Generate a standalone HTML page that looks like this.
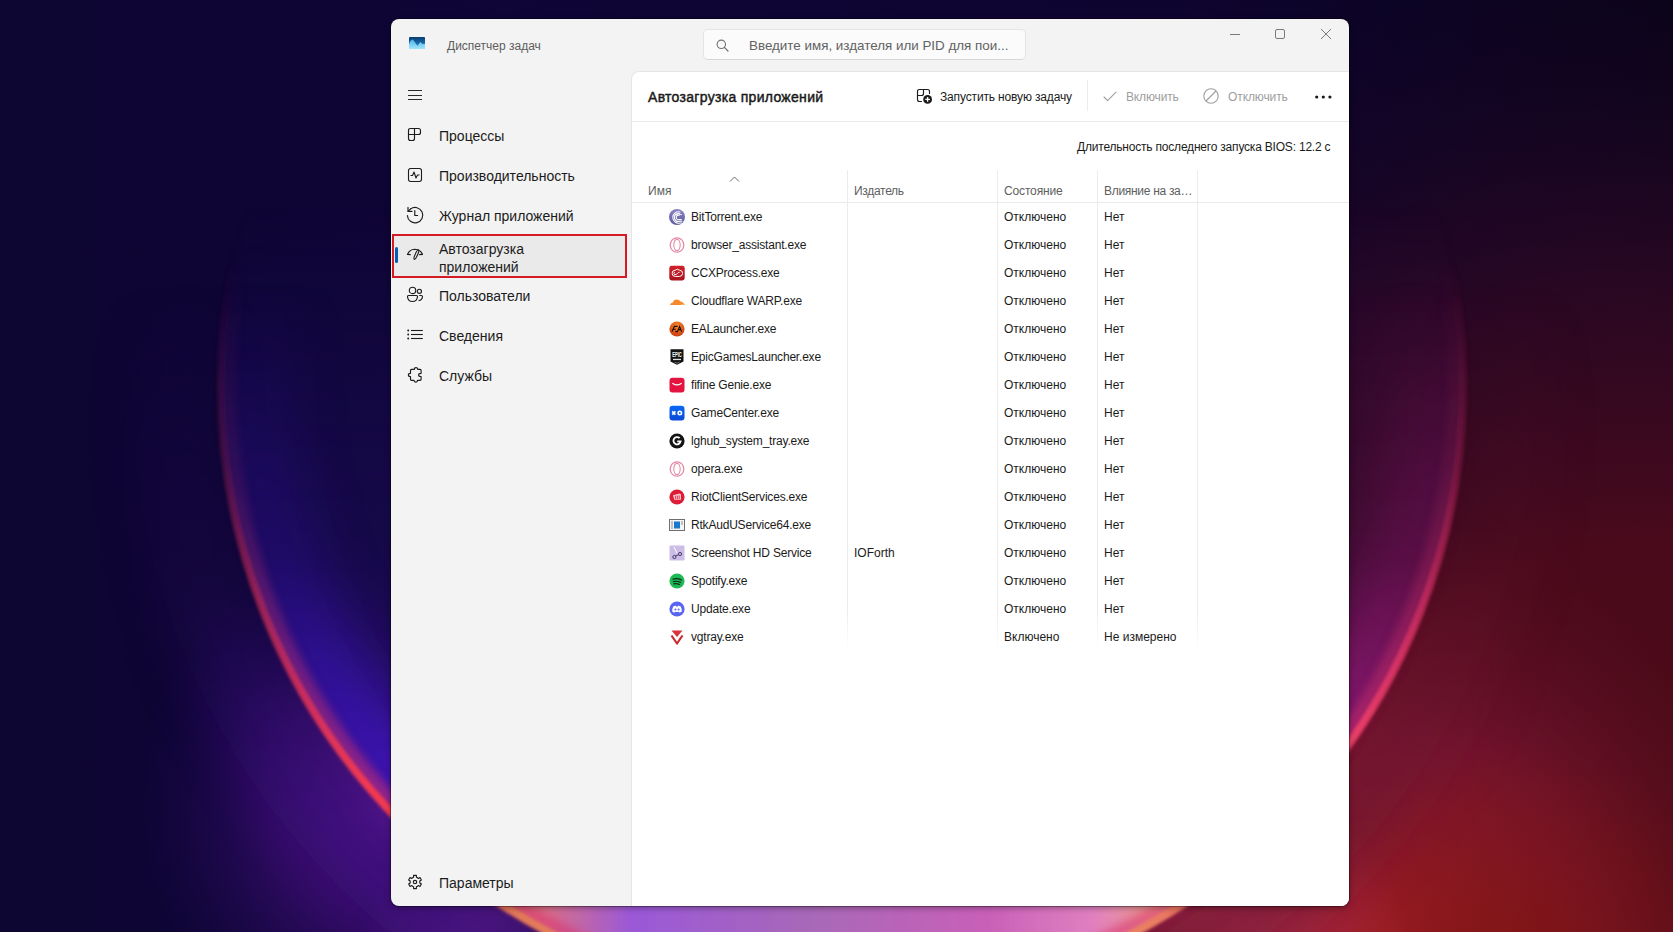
<!DOCTYPE html>
<html><head><meta charset="utf-8">
<style>
*{box-sizing:border-box;margin:0;padding:0}
html,body{width:1673px;height:932px;overflow:hidden;background:#0a0420;font-family:"Liberation Sans",sans-serif}
#bg{position:absolute;left:0;top:0;width:1673px;height:932px}
#win{position:absolute;left:391px;top:19px;width:958px;height:887px;background:#f3f3f3;border-radius:8px;overflow:hidden;box-shadow:0 0 0 1px rgba(0,0,0,.3),0 2px 6px rgba(0,0,0,.35)}
.abs{position:absolute;white-space:nowrap}
.t{line-height:1}
.nav{font-size:14px;color:#1b1b1b}
.ic{position:absolute;overflow:visible}
.tb{font-size:12px;color:#1b1b1b}
.dis{font-size:12px;color:#9e9e9e}
.hd{font-size:12px;color:#5e5e5e}
.cell{font-size:12px;color:#1b1b1b}
.nm{letter-spacing:-0.2px}
.vl{position:absolute;width:1px;background:linear-gradient(#ececec 0,#ececec 92%,rgba(236,236,236,0) 100%)}
</style></head><body>
<svg id="bg" width="1673" height="932" viewBox="0 0 1673 932">
<defs>
 <linearGradient id="base" x1="0" y1="0" x2="1673" y2="0" gradientUnits="userSpaceOnUse">
  <stop offset="0" stop-color="#0d0532"/>
  <stop offset="0.3" stop-color="#0f0536"/>
  <stop offset="0.7" stop-color="#0e0430"/>
  <stop offset="1" stop-color="#0a0418"/>
 </linearGradient>
 <radialGradient id="maroon" cx="1640" cy="860" r="1050" gradientUnits="userSpaceOnUse">
  <stop offset="0" stop-color="#4a0a10" stop-opacity="1"/>
  <stop offset="0.3" stop-color="#4a0a1c" stop-opacity="1"/>
  <stop offset="0.55" stop-color="#300824" stop-opacity="0.8"/>
  <stop offset="0.85" stop-color="#180428" stop-opacity="0"/>
 </radialGradient>
 <radialGradient id="glowL" cx="400" cy="810" r="270" gradientUnits="userSpaceOnUse">
  <stop offset="0" stop-color="#5a1690" stop-opacity="1"/>
  <stop offset="0.5" stop-color="#3a0e70" stop-opacity="0.7"/>
  <stop offset="1" stop-color="#180650" stop-opacity="0"/>
 </radialGradient>
 <radialGradient id="glowR" cx="1380" cy="940" r="420" gradientUnits="userSpaceOnUse">
  <stop offset="0" stop-color="#a82030" stop-opacity="1"/>
  <stop offset="0.5" stop-color="#881838" stop-opacity="0.65"/>
  <stop offset="1" stop-color="#601028" stop-opacity="0"/>
 </radialGradient>
 <radialGradient id="glowBR" cx="1500" cy="1000" r="260" gradientUnits="userSpaceOnUse">
  <stop offset="0" stop-color="#801408" stop-opacity="0.8"/>
  <stop offset="1" stop-color="#801408" stop-opacity="0"/>
 </radialGradient>
 <radialGradient id="glowB1" cx="480" cy="950" r="120" gradientUnits="userSpaceOnUse">
  <stop offset="0" stop-color="#7a2a9a" stop-opacity="0.6"/>
  <stop offset="1" stop-color="#7a2a9a" stop-opacity="0"/>
 </radialGradient>
 <radialGradient id="glowB2" cx="1240" cy="950" r="170" gradientUnits="userSpaceOnUse">
  <stop offset="0" stop-color="#b83050" stop-opacity="0.85"/>
  <stop offset="1" stop-color="#b83050" stop-opacity="0"/>
 </radialGradient>
 <linearGradient id="outerCol" x1="218" y1="0" x2="1466" y2="0" gradientUnits="userSpaceOnUse">
  <stop offset="0" stop-color="#3a1080"/>
  <stop offset="0.3" stop-color="#3a1080"/>
  <stop offset="0.7" stop-color="#6a1430"/>
  <stop offset="1" stop-color="#6a1430"/>
 </linearGradient>
 <linearGradient id="fillCol" x1="218" y1="0" x2="1466" y2="0" gradientUnits="userSpaceOnUse">
  <stop offset="0" stop-color="#1c0858"/>
  <stop offset="0.2" stop-color="#1c0858"/>
  <stop offset="0.8" stop-color="#3a0a38"/>
  <stop offset="1" stop-color="#420a40"/>
 </linearGradient>
 <linearGradient id="vmask3" x1="0" y1="0" x2="0" y2="932" gradientUnits="userSpaceOnUse">
  <stop offset="0.22" stop-color="#fff" stop-opacity="0"/>
  <stop offset="0.5" stop-color="#fff" stop-opacity="0.6"/>
  <stop offset="0.8" stop-color="#fff" stop-opacity="1"/>
 </linearGradient>
 <mask id="m3" maskUnits="userSpaceOnUse" x="0" y="0" width="1673" height="932"><rect width="1673" height="932" fill="url(#vmask3)"/></mask>
 <linearGradient id="innerCol" x1="218" y1="0" x2="1466" y2="0" gradientUnits="userSpaceOnUse">
  <stop offset="0" stop-color="#3a16d8"/>
  <stop offset="0.18" stop-color="#4a12c8"/>
  <stop offset="0.82" stop-color="#9c1a90"/>
  <stop offset="1" stop-color="#b42090"/>
 </linearGradient>
 <linearGradient id="vmask" x1="0" y1="0" x2="0" y2="932" gradientUnits="userSpaceOnUse">
  <stop offset="0.3" stop-color="#fff" stop-opacity="0.0"/>
  <stop offset="0.6" stop-color="#fff" stop-opacity="0.25"/>
  <stop offset="0.8" stop-color="#fff" stop-opacity="0.75"/>
  <stop offset="0.9" stop-color="#fff" stop-opacity="1"/>
 </linearGradient>
 <linearGradient id="vmask2" x1="0" y1="0" x2="0" y2="932" gradientUnits="userSpaceOnUse">
  <stop offset="0.28" stop-color="#fff" stop-opacity="0"/>
  <stop offset="0.5" stop-color="#fff" stop-opacity="0.22"/>
  <stop offset="0.66" stop-color="#fff" stop-opacity="0.6"/>
  <stop offset="0.84" stop-color="#fff" stop-opacity="1"/>
 </linearGradient>
 <mask id="m1" maskUnits="userSpaceOnUse" x="0" y="0" width="1673" height="932"><rect width="1673" height="932" fill="url(#vmask)"/></mask>
 <mask id="m2" maskUnits="userSpaceOnUse" x="0" y="0" width="1673" height="932"><rect width="1673" height="932" fill="url(#vmask2)"/></mask>
 <clipPath id="circ"><circle cx="842" cy="385" r="622"/></clipPath>
 <filter id="b3" x="-20%" y="-20%" width="140%" height="140%"><feGaussianBlur stdDeviation="1.8"/></filter>
 <filter id="b5" x="-20%" y="-20%" width="140%" height="140%"><feGaussianBlur stdDeviation="4"/></filter>
 <filter id="b25" x="-20%" y="-20%" width="140%" height="140%"><feGaussianBlur stdDeviation="26"/></filter>
 <linearGradient id="ringCol" x1="218" y1="0" x2="1466" y2="0" gradientUnits="userSpaceOnUse">
  <stop offset="0" stop-color="#f0325a"/>
  <stop offset="0.14" stop-color="#f03a50"/>
  <stop offset="0.24" stop-color="#e07858"/>
  <stop offset="0.5" stop-color="#f0a070"/>
  <stop offset="0.74" stop-color="#e88060"/>
  <stop offset="0.86" stop-color="#f04a60"/>
  <stop offset="1" stop-color="#ff3878"/>
 </linearGradient>
 <linearGradient id="bottomCol" x1="490" y1="0" x2="1200" y2="0" gradientUnits="userSpaceOnUse">
  <stop offset="0" stop-color="#e07a50"/>
  <stop offset="0.08" stop-color="#d8708a"/>
  <stop offset="0.2" stop-color="#9a58d8"/>
  <stop offset="0.45" stop-color="#a868b8"/>
  <stop offset="0.7" stop-color="#c860b8"/>
  <stop offset="0.85" stop-color="#e080c0"/>
  <stop offset="0.95" stop-color="#f0a080"/>
  <stop offset="1" stop-color="#e87060"/>
 </linearGradient>
</defs>
<rect width="1673" height="932" fill="url(#base)"/>
<rect width="1673" height="932" fill="url(#maroon)"/>
<rect width="1673" height="932" fill="url(#glowL)"/>
<rect width="1673" height="932" fill="url(#glowR)"/>
<rect width="1673" height="932" fill="url(#glowBR)"/>
<rect width="1673" height="932" fill="url(#glowB1)"/>
<rect width="1673" height="932" fill="url(#glowB2)"/>
<g mask="url(#m1)">
 <circle cx="842" cy="385" r="665" fill="none" stroke="url(#outerCol)" stroke-width="90" filter="url(#b25)" opacity="0.55"/>
</g>
<g mask="url(#m3)">
 <circle cx="842" cy="385" r="619" fill="url(#fillCol)" opacity="0.8" filter="url(#b5)"/>
</g>
<g clip-path="url(#circ)" mask="url(#m1)">
 <circle cx="842" cy="385" r="590" fill="none" stroke="url(#innerCol)" stroke-width="90" filter="url(#b25)" opacity="0.95"/>
</g>
<g clip-path="url(#circ)">
 <rect x="480" y="888" width="730" height="50" fill="url(#bottomCol)" filter="url(#b3)"/>
</g>
<g mask="url(#m2)">
 <circle cx="842" cy="385" r="614" fill="none" stroke="#d83070" stroke-width="16" filter="url(#b5)" opacity="0.55"/>
 <circle cx="842" cy="385" r="621" fill="none" stroke="url(#ringCol)" stroke-width="8" filter="url(#b3)"/>
</g>
</svg>
<div id="win"></div>
<!-- title bar -->
<svg class="abs" style="left:409px;top:37px" width="16" height="12" viewBox="0 0 16 12">
 <defs><linearGradient id="tmg" x1="0" y1="0" x2="0" y2="1"><stop offset="0" stop-color="#073f70"/><stop offset="1" stop-color="#2a8ad8"/></linearGradient>
 <linearGradient id="tmg2" x1="0" y1="0" x2="0" y2="1"><stop offset="0" stop-color="#4cb4ea"/><stop offset="1" stop-color="#9fe6fa"/></linearGradient></defs>
 <rect x="0" y="0" width="16" height="12" rx="0.8" fill="url(#tmg)"/>
 <path d="M0 12 V7 L1.6 3.8 L3.8 2.4 L8.5 8.7 L11.3 5 L13.6 7 L16 6.8 V12 Z" fill="url(#tmg2)"/>
</svg>
<div class="abs t" style="left:447px;top:40px;font-size:12px;color:#5d5d5d">Диспетчер задач</div>
<!-- search -->
<div class="abs" style="left:703px;top:29px;width:323px;height:31px;background:#fbfbfb;border:1px solid #e4e4e4;border-bottom-color:#d6d6d6;border-radius:5px"></div>
<svg class="abs" style="left:716px;top:39px" width="13" height="13" viewBox="0 0 13 13"><circle cx="5.3" cy="5.3" r="4.2" fill="none" stroke="#707070" stroke-width="1.1"/><path d="M8.4 8.4 L12 12" stroke="#707070" stroke-width="1.2" stroke-linecap="round"/></svg>
<div class="abs t" style="left:749px;top:39px;font-size:13.4px;color:#626262">Введите имя, издателя или PID для пои...</div>
<!-- window buttons -->
<div class="abs" style="left:1230px;top:34px;width:10px;height:1px;background:#7a7a7a"></div>
<div class="abs" style="left:1275px;top:29px;width:10px;height:10px;border:1px solid #7a7a7a;border-radius:2px"></div>
<svg class="abs" style="left:1320px;top:28px" width="12" height="12" viewBox="0 0 12 12"><path d="M1 1 L11 11 M11 1 L1 11" stroke="#7a7a7a" stroke-width="1"/></svg>
<!-- sidebar -->
<div class="abs" style="left:408px;top:90px;width:14px;height:1px;background:#2a2a2a"></div>
<div class="abs" style="left:408px;top:95px;width:14px;height:1px;background:#2a2a2a"></div>
<div class="abs" style="left:408px;top:99px;width:14px;height:1px;background:#2a2a2a"></div>

<!-- nav items -->
<svg class="ic" style="left:407px;top:127px" width="15" height="15" viewBox="0 0 15 15" fill="none" stroke="#1c1c1c" stroke-width="1.15">
 <path d="M1.5 3.5 Q1.5 1.5 3.5 1.5 H11.5 Q13.5 1.5 13.5 3.5 V5.5 Q13.5 7.5 11.5 7.5 H7.5 V11.5 Q7.5 13.5 5.5 13.5 H3.5 Q1.5 13.5 1.5 11.5 Z M7.5 1.5 V7.5 M1.5 7.5 H7.5"/>
</svg>
<div class="abs t nav" style="left:439px;top:129px">Процессы</div>
<svg class="ic" style="left:407px;top:167px" width="16" height="16" viewBox="0 0 16 16" fill="none" stroke="#1c1c1c" stroke-width="1.1">
 <rect x="1.5" y="1.5" width="13" height="13" rx="2.2"/>
 <path d="M3.5 8.5 H5.5 L7 5 L9 11 L10.5 8 H12.5" stroke-linejoin="round"/>
</svg>
<div class="abs t nav" style="left:439px;top:169px">Производительность</div>
<svg class="ic" style="left:406px;top:206px" width="18" height="18" viewBox="0 0 18 18" fill="none" stroke="#1c1c1c" stroke-width="1.15" stroke-linecap="round" stroke-linejoin="round">
 <path d="M4.6 2.9 A7.7 7.7 0 1 1 1.4 9.5"/>
 <path d="M2 1.4 V5.4 H6"/>
 <path d="M2.2 5.2 L4.6 2.9"/>
 <path d="M8.8 4.6 V9.5 H11.6"/>
</svg>
<div class="abs t nav" style="left:439px;top:209px">Журнал приложений</div>
<div class="abs" style="left:392px;top:234px;width:235px;height:44px;background:#eaeaea;border:2px solid #d41a22"></div>
<div class="abs" style="left:395px;top:247px;width:3px;height:16px;background:#005fb8;border-radius:2px"></div>
<svg class="ic" style="left:402px;top:242px" width="26" height="22" viewBox="0 0 26 22" fill="none" stroke="#1c1c1c" stroke-width="1.15" stroke-linecap="round" stroke-linejoin="round">
 <path d="M5.5 12.4 Q7.6 7.4 12.8 7.3 Q18.3 7.4 20.5 12.4"/>
 <path d="M5.5 12.4 L8.3 12.6 M17.6 12.6 L20.5 12.4"/>
 <ellipse cx="14.4" cy="12.6" rx="1.2" ry="5.2" transform="rotate(24 14.4 12.6)"/>
</svg>
<div class="abs t nav" style="left:439px;top:239.5px;line-height:18.5px">Автозагрузка<br>приложений</div>
<svg class="ic" style="left:406px;top:286px" width="18" height="17" viewBox="0 0 18 17" fill="none" stroke="#1c1c1c" stroke-width="1.15">
 <circle cx="6.5" cy="4.4" r="3.2"/>
 <circle cx="13.4" cy="5.3" r="2.1"/>
 <path d="M2.6 9.5 H10.4 Q11.6 9.5 11.5 10.8 Q11 15.5 6.5 15.5 Q2 15.5 1.5 10.8 Q1.4 9.5 2.6 9.5 Z"/>
 <path d="M13.2 9.5 H15.2 Q16.5 9.5 16.5 10.8 Q16.2 14.2 12.6 14.6"/>
</svg>
<div class="abs t nav" style="left:439px;top:289px">Пользователи</div>
<svg class="ic" style="left:406px;top:328px" width="18" height="13" viewBox="0 0 18 13" fill="#1c1c1c">
 <circle cx="2.2" cy="2.5" r="0.95"/><circle cx="2.2" cy="6.5" r="0.95"/><circle cx="2.2" cy="10.5" r="0.95"/>
 <rect x="5" y="1.95" width="11.8" height="1.1"/><rect x="5" y="5.95" width="11.8" height="1.1"/><rect x="5" y="9.95" width="11.8" height="1.1"/>
</svg>
<div class="abs t nav" style="left:439px;top:329px">Сведения</div>
<svg class="ic" style="left:405px;top:365px" width="19" height="20" viewBox="0 0 19 20" fill="none" stroke="#1c1c1c" stroke-width="1.15" stroke-linejoin="round">
 <path d="M6.5 4.4 H9.3 A1.75 1.75 0 0 1 12.8 4.4 H15.1 Q16.1 4.4 16.1 5.4 V8.3 A2.5 1.6 0 0 0 16.1 11.5 V14.3 Q16.1 15.3 15.1 15.3 H12.5 A1.75 1.75 0 0 1 9 15.3 H6.5 Q5.5 15.3 5.5 14.3 V11.6 A2.1 1.65 0 0 1 5.5 8.3 V5.4 Q5.5 4.4 6.5 4.4 Z"/>
</svg>
<div class="abs t nav" style="left:439px;top:369px">Службы</div>
<svg class="ic" style="left:406px;top:873px" width="18" height="18" viewBox="0 0 18 18" fill="none" stroke="#1c1c1c" stroke-width="1.15" stroke-linejoin="round">
 <path d="M6.55 4.76 L7.57 4.31 L7.61 2.35 L10.39 2.35 L10.43 4.31 L11.45 4.76 L12.34 5.42 L13.98 4.52 L15.37 6.93 L13.77 7.90 L13.90 9.00 L13.77 10.10 L15.37 11.07 L13.98 13.48 L12.34 12.58 L11.45 13.24 L10.43 13.69 L10.39 15.55 L7.61 15.55 L7.57 13.69 L6.55 13.24 L5.66 12.58 L4.02 13.48 L2.63 11.07 L4.23 10.10 L4.10 9.00 L4.23 7.90 L2.63 6.93 L4.02 4.52 L5.66 5.42 Z"/>
 <circle cx="9" cy="9" r="1.7"/>
</svg>
<div class="abs t nav" style="left:439px;top:876px">Параметры</div>
<!-- content panel -->
<div class="abs" style="left:631px;top:71px;width:718px;height:835px;background:#fff;border-top-left-radius:8px;border-bottom-right-radius:8px;border-left:1px solid #e6e6e6;border-top:1px solid #e6e6e6"></div>
<div class="abs" style="left:632px;top:121px;width:717px;height:1px;background:#e9e9e9"></div>
<div class="abs t" style="left:648px;top:90px;font-size:14px;font-weight:400;color:#1a1a1a;letter-spacing:0.3px;-webkit-text-stroke:0.45px #1a1a1a">Автозагрузка приложений</div>
<svg class="ic" style="left:916px;top:88px" width="18" height="18" viewBox="0 0 18 18" fill="none" stroke="#1c1c1c" stroke-width="1.15" stroke-linecap="round">
 <path d="M5.5 13.5 H3.4 Q1.5 13.5 1.5 11.5 V3.4 Q1.5 1.5 3.4 1.5 H11.5 Q13.5 1.5 13.5 3.4 V5.5 M7.5 1.5 V5.5 Q7.5 7.5 5.5 7.5 H1.5"/>
 <circle cx="11.6" cy="11.4" r="4.4" fill="#1c1c1c" stroke="none"/>
 <path d="M11.6 9.1 V13.7 M9.3 11.4 H13.9" stroke="#fff" stroke-width="1.3" stroke-linecap="butt"/>
</svg>
<div class="abs t tb" style="left:940px;top:91px;letter-spacing:-0.15px">Запустить новую задачу</div>
<div class="abs" style="left:1087px;top:80px;width:1px;height:31px;background:#ececec"></div>
<svg class="ic" style="left:1103px;top:91px" width="14" height="11" viewBox="0 0 14 11" fill="none" stroke="#9e9e9e" stroke-width="1.1" stroke-linecap="round" stroke-linejoin="round"><path d="M1 6 L4.6 9.6 L13 1.2"/></svg>
<div class="abs t dis" style="left:1126px;top:91px;letter-spacing:-0.15px">Включить</div>
<svg class="ic" style="left:1203px;top:88px" width="16" height="16" viewBox="0 0 16 16" fill="none" stroke="#9e9e9e" stroke-width="1.1"><circle cx="8" cy="8" r="7.2"/><path d="M3 13 L13 3"/></svg>
<div class="abs t dis" style="left:1228px;top:91px;letter-spacing:-0.1px">Отключить</div>
<svg class="ic" style="left:1315px;top:95px" width="17" height="4" viewBox="0 0 17 4" fill="#1a1a1a"><circle cx="1.7" cy="2" r="1.6"/><circle cx="8.3" cy="2" r="1.6"/><circle cx="14.9" cy="2" r="1.6"/></svg>
<div class="abs t tb" style="left:1077px;top:141px;letter-spacing:-0.2px">Длительность последнего запуска BIOS: 12.2 с</div>
<!-- table header -->
<svg class="ic" style="left:729px;top:176px" width="11" height="6" viewBox="0 0 11 6" fill="none" stroke="#6a6a6a" stroke-width="1"><path d="M1 5.5 L5.5 1 L10 5.5"/></svg>
<div class="abs t hd" style="left:648px;top:185px">Имя</div>
<div class="abs t hd" style="left:854px;top:185px;letter-spacing:-0.3px">Издатель</div>
<div class="abs t hd" style="left:1004px;top:185px;letter-spacing:-0.15px">Состояние</div>
<div class="abs t hd" style="left:1104px;top:185px;letter-spacing:-0.3px">Влияние на за…</div>
<div class="abs" style="left:632px;top:202px;width:717px;height:1px;background:#ebebeb"></div>
<div class="vl" style="left:847px;top:170px;height:480px"></div>
<div class="vl" style="left:997px;top:170px;height:480px"></div>
<div class="vl" style="left:1097px;top:170px;height:480px"></div>
<div class="vl" style="left:1197px;top:170px;height:480px"></div>
<!-- rows -->
<svg class="ic" style="left:669px;top:209px" width="16" height="16" viewBox="0 0 16 16"><defs><linearGradient id="btg" x1="0" y1="0" x2="0" y2="1"><stop offset="0" stop-color="#8a84c4"/><stop offset="1" stop-color="#5e58a0"/></linearGradient></defs><circle cx="8" cy="8" r="8" fill="url(#btg)"/><g fill="none" stroke="#fff" stroke-width="1.05" stroke-linecap="round"><path d="M10.3 6.3 A2.3 2.3 0 1 0 10.3 10.6 H12.4"/><path d="M10.6 4.7 A4 4 0 1 0 10.6 12.3 H13"/><path d="M11 3 A5.7 5.7 0 1 0 11 14 H12.4"/><path d="M7.2 5.3 Q9.5 3.9 12.6 5.6" stroke-width="0.9"/></g></svg>
<div class="abs t cell nm" style="left:691px;top:211px">BitTorrent.exe</div>
<div class="abs t cell" style="left:1004px;top:211px">Отключено</div>
<div class="abs t cell" style="left:1104px;top:211px">Нет</div>
<svg class="ic" style="left:669px;top:237px" width="16" height="16" viewBox="0 0 16 16"><ellipse cx="8" cy="8" rx="6.8" ry="7.2" fill="none" stroke="#e58aa4" stroke-width="1.3"/><ellipse cx="8" cy="8" rx="3.2" ry="5.6" fill="none" stroke="#e58aa4" stroke-width="1.1"/></svg>
<div class="abs t cell nm" style="left:691px;top:239px">browser_assistant.exe</div>
<div class="abs t cell" style="left:1004px;top:239px">Отключено</div>
<div class="abs t cell" style="left:1104px;top:239px">Нет</div>
<svg class="ic" style="left:669px;top:265px" width="16" height="16" viewBox="0 0 16 16"><defs><linearGradient id="ccg" x1="0" y1="0" x2="0" y2="1"><stop offset="0" stop-color="#d2202a"/><stop offset="1" stop-color="#a8141e"/></linearGradient></defs><rect x="0.3" y="0.8" width="15.4" height="14.6" rx="2.4" fill="url(#ccg)"/><path d="M6.2 5.2 A3.1 3.1 0 1 0 6.2 11.4 H10.3 A3.1 3.1 0 0 0 10.6 5.2 A3.3 3.3 0 0 0 6.2 5.2 Z" fill="none" stroke="#fff" stroke-width="1"/><path d="M6 7.2 A1.2 1.2 0 1 0 6 9.6 Q8 9.6 9.2 7.6 Q10 6.8 10.6 7.4" fill="none" stroke="#fff" stroke-width="0.9"/></svg>
<div class="abs t cell nm" style="left:691px;top:267px">CCXProcess.exe</div>
<div class="abs t cell" style="left:1004px;top:267px">Отключено</div>
<div class="abs t cell" style="left:1104px;top:267px">Нет</div>
<svg class="ic" style="left:669px;top:293px" width="16" height="16" viewBox="0 0 16 16"><path d="M1 12 Q1.5 9.6 3.8 9.4 Q4.6 6.4 7.6 6.4 Q10.4 6.4 11.4 8.6 Q14.6 8.8 15.6 12 Z" fill="#f48a2a"/><path d="M11.6 12 Q12 10.2 14 10.2 Q15.4 10.6 15.6 12 Z" fill="#f9b04c"/></svg>
<div class="abs t cell nm" style="left:691px;top:295px">Cloudflare WARP.exe</div>
<div class="abs t cell" style="left:1004px;top:295px">Отключено</div>
<div class="abs t cell" style="left:1104px;top:295px">Нет</div>
<svg class="ic" style="left:669px;top:321px" width="16" height="16" viewBox="0 0 16 16"><defs><radialGradient id="eag" cx="0.5" cy="0.3" r="0.8"><stop offset="0" stop-color="#f58a2a"/><stop offset="1" stop-color="#c6300c"/></radialGradient></defs><circle cx="8" cy="8" r="7.6" fill="url(#eag)"/><path d="M3 10.6 L5.4 5.4 H8.6 M3.8 8.2 H6.8 M6.2 10.6 H8.4 L10.6 5.4 L12.6 10.6 M9.6 8.6 H11.8" fill="none" stroke="#1a0c05" stroke-width="1.1"/></svg>
<div class="abs t cell nm" style="left:691px;top:323px">EALauncher.exe</div>
<div class="abs t cell" style="left:1004px;top:323px">Отключено</div>
<div class="abs t cell" style="left:1104px;top:323px">Нет</div>
<svg class="ic" style="left:669px;top:349px" width="16" height="16" viewBox="0 0 16 16"><path d="M1.5 0.2 H14.5 V12.6 L8 15.8 L1.5 12.6 Z" fill="#111"/><text x="8" y="8.4" font-size="7.6" font-weight="700" text-anchor="middle" fill="#fff" font-family="Liberation Sans" textLength="9.6" lengthAdjust="spacingAndGlyphs">EPIC</text><rect x="4" y="9.8" width="8" height="1.3" fill="#ddd"/><path d="M5.5 13 L8 14.2 L10.5 13" fill="none" stroke="#bbb" stroke-width="0.6"/></svg>
<div class="abs t cell nm" style="left:691px;top:351px">EpicGamesLauncher.exe</div>
<div class="abs t cell" style="left:1004px;top:351px">Отключено</div>
<div class="abs t cell" style="left:1104px;top:351px">Нет</div>
<svg class="ic" style="left:669px;top:377px" width="16" height="16" viewBox="0 0 16 16"><rect x="0.5" y="0.8" width="15" height="14.6" rx="3" fill="#e5133f"/><path d="M3.8 6.4 Q8 9.4 12.2 6.4" fill="none" stroke="#fff" stroke-width="1.2" stroke-linecap="round"/></svg>
<div class="abs t cell nm" style="left:691px;top:379px">fifine Genie.exe</div>
<div class="abs t cell" style="left:1004px;top:379px">Отключено</div>
<div class="abs t cell" style="left:1104px;top:379px">Нет</div>
<svg class="ic" style="left:669px;top:405px" width="16" height="16" viewBox="0 0 16 16"><defs><linearGradient id="gcg" x1="0" y1="0" x2="0" y2="1"><stop offset="0" stop-color="#0a6af4"/><stop offset="1" stop-color="#0a48d8"/></linearGradient></defs><rect x="0.5" y="0.8" width="15" height="14.6" rx="3.2" fill="url(#gcg)"/><path d="M3.2 6.4 L6.4 9.6 M6.4 6.4 L3.2 9.6" stroke="#fff" stroke-width="1.6"/><circle cx="10.8" cy="8" r="1.7" fill="none" stroke="#fff" stroke-width="1.6"/></svg>
<div class="abs t cell nm" style="left:691px;top:407px">GameCenter.exe</div>
<div class="abs t cell" style="left:1004px;top:407px">Отключено</div>
<div class="abs t cell" style="left:1104px;top:407px">Нет</div>
<svg class="ic" style="left:669px;top:433px" width="16" height="16" viewBox="0 0 16 16"><circle cx="8" cy="8" r="7.6" fill="#141414"/><path d="M10.6 5.2 A3.6 3.6 0 1 0 11.6 8.4 H8.2" fill="none" stroke="#fff" stroke-width="1.8"/></svg>
<div class="abs t cell nm" style="left:691px;top:435px">lghub_system_tray.exe</div>
<div class="abs t cell" style="left:1004px;top:435px">Отключено</div>
<div class="abs t cell" style="left:1104px;top:435px">Нет</div>
<svg class="ic" style="left:669px;top:461px" width="16" height="16" viewBox="0 0 16 16"><ellipse cx="8" cy="8" rx="6.8" ry="7.2" fill="none" stroke="#e58aa4" stroke-width="1.3"/><ellipse cx="8" cy="8" rx="3.2" ry="5.6" fill="none" stroke="#e58aa4" stroke-width="1.1"/></svg>
<div class="abs t cell nm" style="left:691px;top:463px">opera.exe</div>
<div class="abs t cell" style="left:1004px;top:463px">Отключено</div>
<div class="abs t cell" style="left:1104px;top:463px">Нет</div>
<svg class="ic" style="left:669px;top:489px" width="16" height="16" viewBox="0 0 16 16"><circle cx="8" cy="8" r="7.6" fill="#df1c36"/><path d="M4 6.2 L10.6 4.6 L12 5.6 V10.8 H5.2 Z" fill="#f6c8cc"/><path d="M6.6 6.8 V10 M8.4 6.6 V10 M10.2 6.4 V10" stroke="#df1c36" stroke-width="0.8"/></svg>
<div class="abs t cell nm" style="left:691px;top:491px">RiotClientServices.exe</div>
<div class="abs t cell" style="left:1004px;top:491px">Отключено</div>
<div class="abs t cell" style="left:1104px;top:491px">Нет</div>
<svg class="ic" style="left:669px;top:517px" width="16" height="16" viewBox="0 0 16 16"><rect x="0.5" y="2.5" width="15" height="11" fill="#f6f6f6" stroke="#6e6e6e" stroke-width="1"/><rect x="5" y="4.5" width="6" height="7" fill="#1a78d0"/><path d="M2 5 H4 M2 7 H4 M2 9 H4 M2 11 H4 M12 5 H14 M12 7 H14" stroke="#777" stroke-width="0.8"/></svg>
<div class="abs t cell nm" style="left:691px;top:519px">RtkAudUService64.exe</div>
<div class="abs t cell" style="left:1004px;top:519px">Отключено</div>
<div class="abs t cell" style="left:1104px;top:519px">Нет</div>
<svg class="ic" style="left:669px;top:545px" width="16" height="16" viewBox="0 0 16 16"><rect x="0.5" y="0.5" width="15" height="15" rx="1" fill="#cbbde6"/><path d="M5 2 L8.2 8.4" stroke="#fff" stroke-width="1"/><circle cx="5.4" cy="12" r="1.6" fill="none" stroke="#4a3a70" stroke-width="1"/><circle cx="11" cy="9" r="1.6" fill="none" stroke="#4a3a70" stroke-width="1"/><path d="M6.6 11 L9.6 9.6" stroke="#4a3a70" stroke-width="1"/></svg>
<div class="abs t cell nm" style="left:691px;top:547px">Screenshot HD Service</div>
<div class="abs t cell" style="left:854px;top:547px">IOForth</div>
<div class="abs t cell" style="left:1004px;top:547px">Отключено</div>
<div class="abs t cell" style="left:1104px;top:547px">Нет</div>
<svg class="ic" style="left:669px;top:573px" width="16" height="16" viewBox="0 0 16 16"><circle cx="8" cy="8" r="7.6" fill="#1db954"/><path d="M3.8 6.2 Q8.4 4.8 12.4 7 M4.4 8.6 Q8 7.6 11.4 9.4 M4.9 10.8 Q7.8 10.1 10.6 11.5" fill="none" stroke="#0f2a18" stroke-width="1.2" stroke-linecap="round"/></svg>
<div class="abs t cell nm" style="left:691px;top:575px">Spotify.exe</div>
<div class="abs t cell" style="left:1004px;top:575px">Отключено</div>
<div class="abs t cell" style="left:1104px;top:575px">Нет</div>
<svg class="ic" style="left:669px;top:601px" width="16" height="16" viewBox="0 0 16 16"><circle cx="8" cy="8" r="7.6" fill="#5865f2"/><path d="M4.2 5.4 Q6 4.4 7.2 4.8 L7 5.6 Q8 5.4 9 5.6 L8.8 4.8 Q10 4.4 11.8 5.4 Q13 7.8 12.8 10.4 Q11.6 11.4 10.2 11.6 L9.6 10.8 Q8 11.2 6.4 10.8 L5.8 11.6 Q4.4 11.4 3.2 10.4 Q3 7.8 4.2 5.4 Z" fill="#fff"/><circle cx="6.4" cy="8.4" r="1" fill="#5865f2"/><circle cx="9.6" cy="8.4" r="1" fill="#5865f2"/></svg>
<div class="abs t cell nm" style="left:691px;top:603px">Update.exe</div>
<div class="abs t cell" style="left:1004px;top:603px">Отключено</div>
<div class="abs t cell" style="left:1104px;top:603px">Нет</div>
<svg class="ic" style="left:669px;top:629px" width="16" height="16" viewBox="0 0 16 16"><path d="M2.5 1.5 H13.5 L8 8 Z" fill="#d8343a"/><path d="M2.5 6.5 L8 14.5 L13.5 6.5" fill="none" stroke="#c82a30" stroke-width="2.2" stroke-linejoin="round"/></svg>
<div class="abs t cell nm" style="left:691px;top:631px">vgtray.exe</div>
<div class="abs t cell" style="left:1004px;top:631px">Включено</div>
<div class="abs t cell" style="left:1104px;top:631px">Не измерено</div>
</body></html>
